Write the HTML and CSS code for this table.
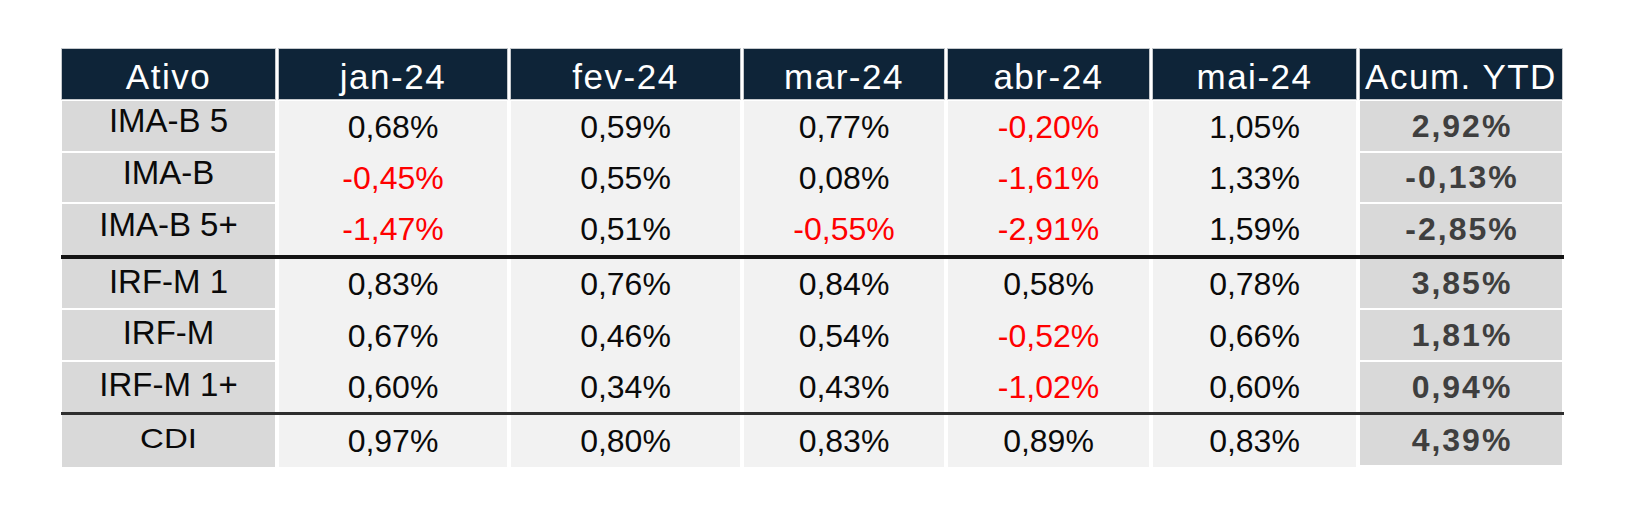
FILE: index.html
```html
<!DOCTYPE html>
<html lang="pt-BR">
<head>
<meta charset="utf-8">
<title>Rentabilidade dos índices</title>
<link rel="stylesheet" href="styles.css">
</head>
<body>
<div class="sheet">
  <div class="grid">
    <div class="hd">Ativo</div>
    <div class="hd">jan-24</div>
    <div class="hd">fev-24</div>
    <div class="hd">mar-24</div>
    <div class="hd">abr-24</div>
    <div class="hd">mai-24</div>
    <div class="hd">Acum. YTD</div>

    <div class="spacer"></div>

    <div class="lab up r52">IMA-B 5</div>
    <div class="val r52">0,68%</div>
    <div class="val r52">0,59%</div>
    <div class="val r52">0,77%</div>
    <div class="val neg r52">-0,20%</div>
    <div class="val r52">1,05%</div>
    <div class="acc r52">2,92%</div>

    <div class="lab up">IMA-B</div>
    <div class="val neg">-0,45%</div>
    <div class="val">0,55%</div>
    <div class="val">0,08%</div>
    <div class="val neg">-1,61%</div>
    <div class="val">1,33%</div>
    <div class="acc">-0,13%</div>

    <div class="lab up last">IMA-B 5+</div>
    <div class="val neg">-1,47%</div>
    <div class="val">0,51%</div>
    <div class="val neg">-0,55%</div>
    <div class="val neg">-2,91%</div>
    <div class="val">1,59%</div>
    <div class="acc last">-2,85%</div>

    <div class="rule thick"></div>

    <div class="lab">IRF-M 1</div>
    <div class="val">0,83%</div>
    <div class="val">0,76%</div>
    <div class="val">0,84%</div>
    <div class="val">0,58%</div>
    <div class="val">0,78%</div>
    <div class="acc">3,85%</div>

    <div class="lab r52">IRF-M</div>
    <div class="val r52">0,67%</div>
    <div class="val r52">0,46%</div>
    <div class="val r52">0,54%</div>
    <div class="val neg r52">-0,52%</div>
    <div class="val r52">0,66%</div>
    <div class="acc r52">1,81%</div>

    <div class="lab last r50">IRF-M 1+</div>
    <div class="val r50">0,60%</div>
    <div class="val r50">0,34%</div>
    <div class="val r50">0,43%</div>
    <div class="val neg r50">-1,02%</div>
    <div class="val r50">0,60%</div>
    <div class="acc last r50">0,94%</div>

    <div class="rule thin"></div>

    <div class="lab last r52"><span class="squish">CDI</span></div>
    <div class="val r52">0,97%</div>
    <div class="val r52">0,80%</div>
    <div class="val r52">0,83%</div>
    <div class="val r52">0,89%</div>
    <div class="val r52">0,83%</div>
    <div class="acc last r50">4,39%</div>
  </div>
</div>
</body>
</html>
```

FILE: styles.css
```css
html, body {
  margin: 0;
  padding: 0;
  background: #ffffff;
}

body {
  font-family: "Liberation Sans", Arial, sans-serif;
  width: 1638px;
  height: 510px;
  overflow: hidden;
}

.sheet {
  padding: 49px 0 0 62px;
}

.grid {
  display: grid;
  grid-template-columns: 213px 228px 229px 200px 201px 203px 202px;
  column-gap: 4px;
  width: 1500px;
  align-items: start;
}

.hd {
  background: #0e2438;
  color: #ffffff;
  height: 50px;
  box-sizing: border-box;
  padding-top: 6px;
  line-height: 44px;
  font-size: 35px;
  letter-spacing: 1.5px;
  text-align: center;
  white-space: nowrap;
  box-shadow: 0 0 0 1px #c4c8cc;
}

.spacer {
  grid-column: 1 / -1;
  height: 2px;
}

.lab,
.val,
.acc {
  height: 51px;
  box-sizing: border-box;
  text-align: center;
  white-space: nowrap;
}

.r52 { height: 52px; }
.r50 { height: 50px; }

.lab {
  background: #d9d9d9;
  color: #0a0a0a;
  font-size: 33px;
  border-bottom: 2px solid #ffffff;
  display: flex;
  align-items: center;
  justify-content: center;
  padding-bottom: 4px;
}

.lab.up {
  padding-bottom: 10px;
}

.lab.last,
.acc.last {
  border-bottom: 0;
}

.val {
  background: #f2f2f2;
  color: #0a0a0a;
  font-size: 32px;
  display: flex;
  align-items: center;
  justify-content: center;
}

.val.neg {
  color: #ff0000;
}

.acc {
  background: #d9d9d9;
  color: #3f3f3f;
  font-weight: bold;
  font-size: 32px;
  letter-spacing: 2px;
  border-bottom: 2px solid #ffffff;
  display: flex;
  align-items: center;
  justify-content: center;
  padding-left: 2px;
}

.squish {
  display: inline-block;
  font-size: 33px;
  transform: scaleY(0.85);
}

.rule {
  grid-column: 1 / -1;
  margin: 0 -2px 0 -1px;
}

.rule.thick {
  height: 4px;
  background: #141414;
}

.rule.thin {
  height: 3px;
  background: #2e2e2e;
}
```
